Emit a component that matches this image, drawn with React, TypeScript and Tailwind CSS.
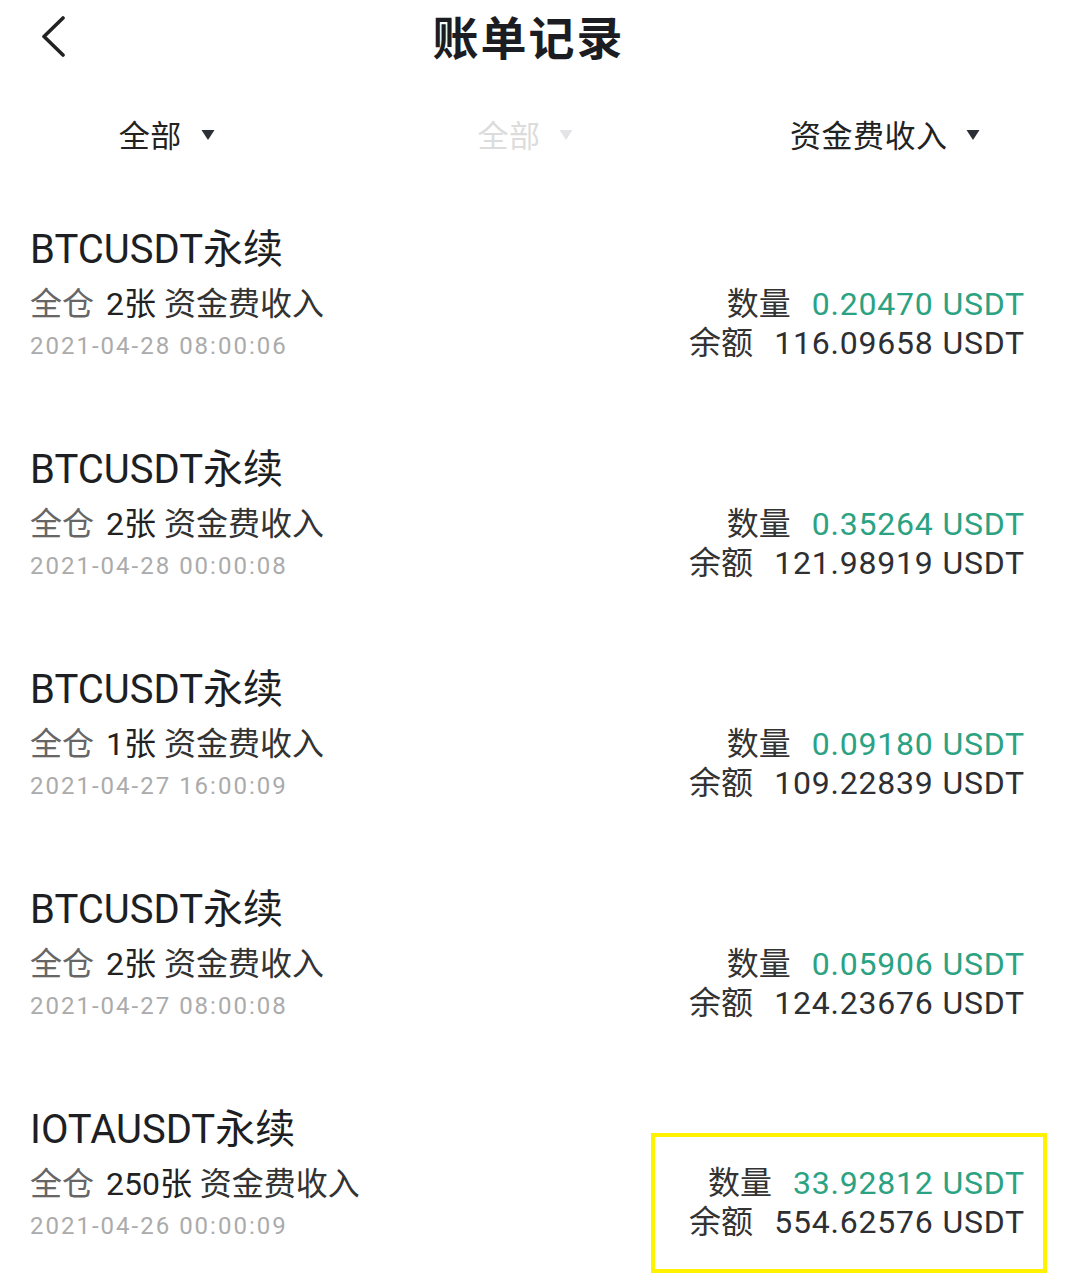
import React from 'react';

const font = { fontFamily: 'Roboto, "Noto Sans CJK SC", sans-serif' };

type Bill = {
  symbol: string;
  lots: string;
  time: string;
  amount: string;
  balance: string;
  marked?: boolean;
};

const bills: Bill[] = [
  { symbol: 'BTCUSDT', lots: '2张', time: '2021-04-28 08:00:06', amount: '0.20470', balance: '116.09658' },
  { symbol: 'BTCUSDT', lots: '2张', time: '2021-04-28 00:00:08', amount: '0.35264', balance: '121.98919' },
  { symbol: 'BTCUSDT', lots: '1张', time: '2021-04-27 16:00:09', amount: '0.09180', balance: '109.22839' },
  { symbol: 'BTCUSDT', lots: '2张', time: '2021-04-27 08:00:08', amount: '0.05906', balance: '124.23676' },
  { symbol: 'IOTAUSDT', lots: '250张', time: '2021-04-26 00:00:09', amount: '33.92812', balance: '554.62576', marked: true },
];

const Caret = ({ faded }: { faded?: boolean }) => (
  <svg width="14" height="12" viewBox="0 0 14 12" className="ml-[19px] mt-[-4px]">
    <path d="M0.5 1 L13.5 1 L7 11 Z" fill={faded ? '#e4e4e6' : '#2d2f36'} />
  </svg>
);

const Filter = ({ label, faded, className }: { label: string; faded?: boolean; className: string }) => (
  <div className={`flex items-center justify-center ${className}`}>
    <span className={`text-[31px] leading-[40px] tracking-[0.5px] ${faded ? 'text-[#dcdcdc]' : 'text-[#222222]'}`}>{label}</span>
    <Caret faded={faded} />
  </div>
);

const Amounts = ({ bill }: { bill: Bill }) => (
  <div className="flex flex-col items-end text-[32px] leading-[39px] tracking-[0.8px]">
    <div className="flex items-center">
      <span className="text-[#333333] tracking-normal">数量</span>
      <span className="ml-[21px] text-[#2ba282]">{bill.amount} USDT</span>
    </div>
    <div className="flex items-center">
      <span className="text-[#333333] tracking-normal">余额</span>
      <span className="ml-[21px] text-[#2e2f33]">{bill.balance} USDT</span>
    </div>
  </div>
);

const BillRow = ({ bill }: { bill: Bill }) => (
  <div className={`flex h-[220px] justify-between pl-[30px] ${bill.marked ? 'pr-[20px]' : 'pr-[42px]'}`}>
    <div className="flex flex-col pt-[32px]">
      <div className="text-[40px] leading-[44px] text-[#1e1f23]">{bill.symbol}永续</div>
      <div className="mt-[12px] text-[32px] leading-[40px] text-[#666666]">
        全仓 <span className="ml-[4px] text-[#222222]">{bill.lots}</span>{' '}
        <span className="text-[#333333]">资金费收入</span>
      </div>
      <div className="mt-[6px] text-[24px] leading-[32px] tracking-[2px] text-[#ababab]">{bill.time}</div>
    </div>
    {bill.marked ? (
      <div className="mt-[57px] flex h-[140px] w-[396px] justify-end border-4 border-[#fff200] pr-[18px] pt-[27px]">
        <Amounts bill={bill} />
      </div>
    ) : (
      <div className="pt-[89px]">
        <Amounts bill={bill} />
      </div>
    )}
  </div>
);

export default function App() {
  return (
    <div className="min-h-[1285px] w-[1067px] overflow-hidden bg-white" style={font}>
      <header className="relative flex h-[78px] items-center justify-center pr-[10px]">
        <svg width="28" height="42" viewBox="0 0 28 42" className="absolute left-[39px] top-[16px]">
          <path d="M24 2 L5 20.5 L24 39" fill="none" stroke="#222222" strokeWidth="3.6" strokeLinecap="round" strokeLinejoin="round" />
        </svg>
        <h1 className="text-[46px] font-bold leading-[56px] tracking-[2px] text-[#1c1d22]">账单记录</h1>
      </header>

      <div className="grid h-[118px] grid-cols-3 items-center">
        <Filter label="全部" className="pr-[22px]" />
        <Filter label="全部" faded className="pr-[16px]" />
        <Filter label="资金费收入" className="pr-[8px]" />
      </div>

      <div className="flex flex-col">
        {bills.map((b) => (
          <BillRow key={b.time} bill={b} />
        ))}
      </div>
    </div>
  );
}
